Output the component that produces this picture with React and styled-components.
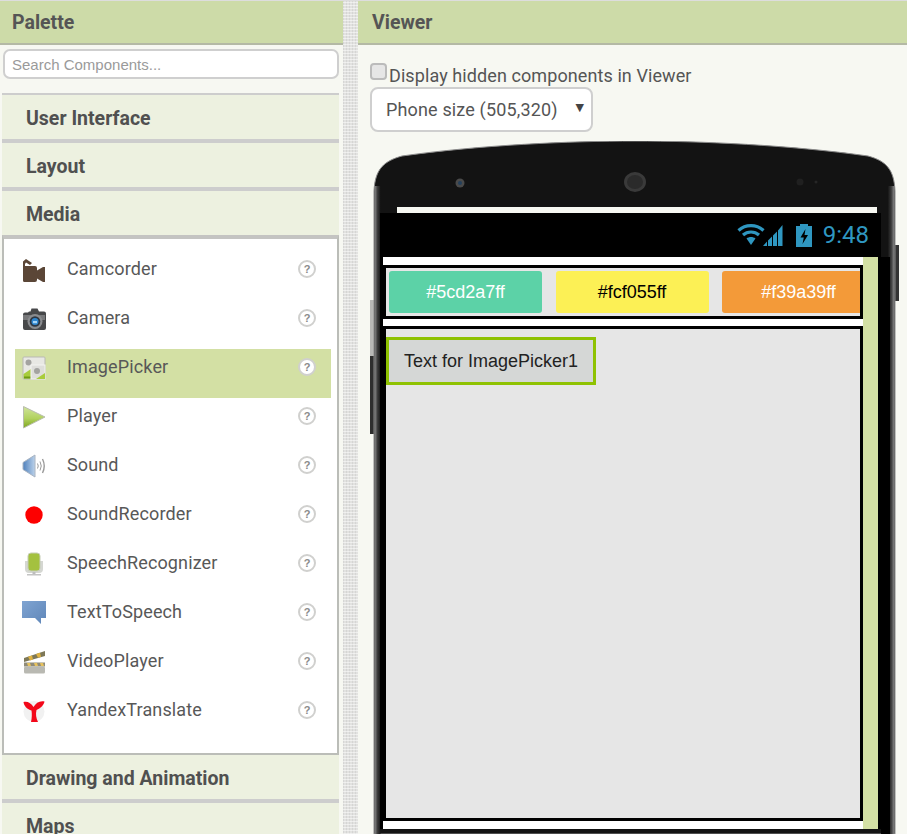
import React from 'react';
import styled, { createGlobalStyle } from 'styled-components';

const GlobalStyle = createGlobalStyle`
  html, body {
    margin: 0;
    padding: 0;
    background: #f7f8f2;
  }
  * {
    box-sizing: border-box;
  }
`;

const Page = styled.div`
  display: flex;
  width: 907px;
  height: 834px;
  padding-top: 1px;
  overflow: hidden;
  background: #dddddd;
  font-family: Roboto, "Liberation Sans", sans-serif;
  color: #555;
`;

const PalettePanel = styled.aside`
  flex: 0 0 343px;
  display: flex;
  flex-direction: column;
  background: #f7f8f2;
`;

const PanelHeader = styled.h2`
  margin: 0;
  flex: 0 0 44px;
  min-height: 0;
  padding-left: ${(p) => p.$inset}px;
  font-size: 19.5px;
  font-weight: 700;
  line-height: 43px;
  color: #555;
  background: #cddba8;
  border-bottom: 2px solid #b4b9a5;
`;

const SearchBox = styled.input`
  display: block;
  flex: 0 0 30px;
  width: 336px;
  height: 30px;
  margin: 4px 0 14px 3px;
  padding: 0 7px;
  border: 2px solid #cfcfcf;
  border-radius: 7px;
  background: #fff;
  font-family: "Liberation Sans", sans-serif;
  font-size: 15px;
  color: #555;
  outline: none;
  &::placeholder {
    color: #9a9a9a;
    opacity: 1;
  }
`;

const Accordion = styled.div`
  flex: none;
  width: 337px;
  margin-left: 2px;
`;

const SectionHeader = styled.div`
  height: ${(p) => 44 + p.$rule}px;
  padding-left: 24px;
  border-top: ${(p) => p.$rule}px solid #cdcdcd;
  background: #edf1e0;
  font-size: 19.5px;
  font-weight: 700;
  line-height: 48px;
  color: #505050;
`;

const Drawer = styled.ul`
  margin: 0;
  padding: 12px 6px 12px 11px;
  list-style: none;
  background: #fff;
  border: 2px solid #bbbdb8;
  border-top: 4px solid #c4c4c2;
`;

const Row = styled.li`
  display: flex;
  align-items: flex-start;
  height: 49px;
  padding: 6px 15px 0 7px;
  background: ${(p) => (p.$selected ? '#d3e0a4' : 'transparent')};
`;

const RowIcon = styled.svg`
  flex: 0 0 24px;
  width: 24px;
  height: 24px;
  margin-top: 1px;
`;

const RowLabel = styled.span`
  flex: 1;
  margin-left: 21px;
  font-size: 18px;
  line-height: 24px;
  letter-spacing: 0.13px;
  color: #585858;
`;

const HelpBadge = styled.span`
  flex: 0 0 18px;
  width: 18px;
  height: 18px;
  margin-top: 3px;
  border: 2px solid #d0d0ce;
  border-radius: 50%;
  background: #fff;
  font-family: "Liberation Sans", sans-serif;
  font-size: 11px;
  font-weight: 700;
  line-height: 14px;
  text-align: center;
  color: #8a8a8a;
`;

const Splitter = styled.div`
  flex: 0 0 15px;
  background-color: #e2e2e0;
  background-image:
    repeating-linear-gradient(0deg, rgba(255, 255, 255, 0.5) 0 1px, transparent 1px 3px),
    repeating-linear-gradient(90deg, rgba(190, 190, 190, 0.35) 0 1px, transparent 1px 3px);
`;

const ViewerPanel = styled.main`
  flex: 1;
  min-width: 0;
  display: flex;
  flex-direction: column;
  background: #f7f8f2;
`;

const ViewerBody = styled.div`
  padding: 18px 0 0 12px;
`;

const HiddenToggle = styled.label`
  display: flex;
  align-items: flex-start;
  height: 24px;
  font-size: 18px;
  line-height: 26px;
  letter-spacing: 0.09px;
  color: #555;
`;

const Check = styled.input`
  appearance: none;
  width: 17px;
  height: 17px;
  margin: 0 2px 0 0;
  border: 2px solid #bbbbbb;
  border-radius: 4px;
  background: #e6e6e6;
`;

const SizeSelect = styled.div`
  position: relative;
  display: flex;
  align-items: center;
  width: 223px;
  height: 45px;
  padding-left: 14px;
  border: 2px solid #cfcfcf;
  border-radius: 8px;
  background: #fff;
  font-size: 18px;
  letter-spacing: 0.15px;
  color: #555;
  &::after {
    content: '▼';
    position: absolute;
    right: 7px;
    top: 12px;
    font-family: "DejaVu Sans", sans-serif;
    font-size: 11px;
    line-height: 14px;
    color: #444;
  }
`;

const PhoneFrame = styled.div`
  position: relative;
  width: 529px;
  margin-top: 9px;
  padding: 72px 18px 0 10px;
`;

const PhoneBody = styled.svg`
  position: absolute;
  left: 0;
  top: 0;
  width: 529px;
  height: 693px;
`;

const StatusBar = styled.div`
  position: relative;
  display: flex;
  align-items: center;
  justify-content: flex-end;
  height: 44px;
  padding-right: 12px;
  background: #000;
`;

const StatusTime = styled.span`
  margin-left: 8px;
  font-size: 24px;
  line-height: 44px;
  color: #2f97c1;
`;

const ScreenRow = styled.div`
  position: relative;
  display: flex;
  height: 572px;
  padding: 0 3px;
  background: #000;
`;

const Canvas = styled.div`
  flex: 1;
  min-width: 0;
  display: flex;
  flex-direction: column;
  gap: 7px;
  padding: 8px 0;
  background: #fff;
`;

const ScrollTrack = styled.div`
  flex: 0 0 15px;
  background: #d3e0a4;
`;

const ButtonRow = styled.div`
  flex: 0 0 54px;
  display: flex;
  gap: 13.500px;
  padding: 3px;
  overflow: hidden;
  border: 3px solid #000;
  background: #e6e6e6;
`;

const ColorButton = styled.div`
  flex: 0 0 153px;
  height: 42px;
  border-radius: 3px;
  background: ${(p) => p.$bg};
  font-family: "Liberation Sans", sans-serif;
  font-size: 18px;
  line-height: 42px;
  text-align: center;
  color: ${(p) => p.$fg};
`;

const Arrangement = styled.div`
  flex: 1;
  padding: 8px 0;
  border: 3px solid #000;
  background: #e6e6e6;
`;

const PickerButton = styled.div`
  width: 210px;
  height: 48px;
  padding-left: 15px;
  border: 3px solid #8fc202;
  background: #d5d7d6;
  font-family: "Liberation Sans", sans-serif;
  font-size: 18px;
  line-height: 42px;
  color: #222;
`;

const icons = {
  camcorder: (
    <>
      <path d="M1 3.500 4 1l6 4-2 2-4-2.500-1 1.500v2h10a2 2 0 0 1 2 2v2.500l6-3.500h2v15h-2l-6-3.500v1.500a2 2 0 0 1-2 2H2a1.500 1.500 0 0 1-1-1.500z" fill="#5b4637" />
    </>
  ),
  camera: (
    <>
      <path d="M1 7.500a2 2 0 0 1 2-2h3l1-1h1.500l1-3h6l1.500 3h5a2 2 0 0 1 2 2V21a2 2 0 0 1-2 2H3a2 2 0 0 1-2-2z" fill="#47484a" />
      <rect x="1" y="8" width="22" height="5" fill="#77787a" />
      <circle cx="13" cy="14.500" r="7.500" fill="#8a8c8f" />
      <circle cx="13" cy="14.500" r="5.300" fill="#2c3744" />
      <circle cx="13" cy="14.500" r="3.500" fill="#2f87d0" />
      <rect x="11" y="14" width="4" height="2.200" fill="#a6d4f6" />
    </>
  ),
  imagepicker: (
    <>
      <rect x="1" y="1" width="22" height="22" rx="1" fill="#e8e8e4" stroke="#b9b9b4" />
      <circle cx="6.500" cy="6.500" r="3" fill="#a3a3a0" />
      <path d="M1.500 18 9 13v9.500H1.500z" fill="#a8cc3c" />
      <path d="M2 20.500h7v2H2z" fill="#6f9c10" />
      <rect x="9" y="9" width="14" height="14" fill="#dededb" stroke="#f3f3f1" />
      <circle cx="15" cy="15" r="3" fill="#a3a3a0" />
      <path d="M23 17v6h-9z" fill="#a8cc3c" />
    </>
  ),
  player: (
    <>
      <defs>
        <linearGradient id="playerFill" x1="0" y1="0" x2="0" y2="1">
          <stop offset="0" stopColor="#cfe49b" />
          <stop offset="0.55" stopColor="#b2d260" />
          <stop offset="1" stopColor="#7ea51e" />
        </linearGradient>
      </defs>
      <path d="M1.500 1.500 23 12 1.500 23z" fill="url(#playerFill)" stroke="#b9bdae" strokeLinejoin="round" />
    </>
  ),
  sound: (
    <>
      <defs>
        <linearGradient id="soundFill" x1="0" y1="0" x2="1" y2="0">
          <stop offset="0" stopColor="#4f81bd" />
          <stop offset="1" stopColor="#bcd2ea" />
        </linearGradient>
      </defs>
      <path d="M1 8.500 13 1v22L1 15.500z" fill="url(#soundFill)" stroke="#a9b4c2" />
      <g fill="none" stroke="#9a9a9a">
        <path d="M15.500 9.500q1.500 2.500 0 5" />
        <path d="M18 7.500q2.500 4.500 0 9" />
        <path d="M20.500 5q3.500 7 0 14" strokeWidth="1.400" />
      </g>
    </>
  ),
  recorder: <circle cx="12" cy="12" r="8.700" fill="#fd0000" />,
  speech: (
    <>
      <path d="M3 9v8a4 4 0 0 0 4 4h10a4 4 0 0 0 4-4V9" fill="#d5d7d2" />
      <rect x="6" y="1" width="12" height="18" rx="3" fill="#a4c13f" stroke="#c6cdb6" />
      <rect x="10.500" y="20" width="3" height="2.500" fill="#bdbdbd" />
      <rect x="5" y="22" width="14" height="1.500" fill="#c4c4c4" />
    </>
  ),
  bubble: (
    <>
      <defs>
        <linearGradient id="bubbleFill" x1="0" y1="0" x2="1" y2="1">
          <stop offset="0" stopColor="#7fa4d2" />
          <stop offset="1" stopColor="#5f86b8" />
        </linearGradient>
      </defs>
      <path d="M0 0h24v17h-5v6l-6-6H0z" fill="url(#bubbleFill)" />
    </>
  ),
  video: (
    <>
      <path d="M2 8 23 1v5L2 12z" fill="#7d7858" />
      <path d="M6 6.800 10 5.500l1 4-3 1zM14 4l4-1.300 1 4-3 1z" fill="#e0b342" />
      <rect x="2" y="12.500" width="21" height="4" fill="#8f8b79" />
      <path d="M5 13h3l1 3H6zM12 13h3l1 3h-3zM18 13h3l1 3h-3z" fill="#e7c25e" />
      <rect x="2" y="16.500" width="21" height="7" rx="1.500" fill="#b9b9b2" />
    </>
  ),
  yandex: (
    <>
      <circle cx="12" cy="12.500" r="10.500" fill="#f1f1f1" />
      <path d="M1.500 3c4-1 7.500 1 10 5 2.500-4 6-6.500 11-5.500-.5 3.500-4 7-8 8.500-1 4-.5 8 1.500 12H9c1-4 1-8 .5-11.500C5.500 10.500 2 7 1.500 3z" fill="#f3081a" />
    </>
  ),
};

const components = [
  ['Camcorder', 'camcorder'],
  ['Camera', 'camera'],
  ['ImagePicker', 'imagepicker', true],
  ['Player', 'player'],
  ['Sound', 'sound'],
  ['SoundRecorder', 'recorder'],
  ['SpeechRecognizer', 'speech'],
  ['TextToSpeech', 'bubble'],
  ['VideoPlayer', 'video'],
  ['YandexTranslate', 'yandex'],
];

function PhoneDrawing() {
  return (
    <PhoneBody viewBox="0 0 529 693">
      <defs>
        <linearGradient id="edgeLeft" x1="0" y1="0" x2="1" y2="0">
          <stop offset="0" stopColor="#8d8d8d" />
          <stop offset="0.5" stopColor="#3c3c3c" />
          <stop offset="1" stopColor="#161616" />
        </linearGradient>
        <linearGradient id="edgeRight" x1="0" y1="0" x2="1" y2="0">
          <stop offset="0" stopColor="#161616" />
          <stop offset="0.5" stopColor="#3c3c3c" />
          <stop offset="1" stopColor="#8d8d8d" />
        </linearGradient>
      </defs>
      <rect x="0" y="159" width="5" height="56" fill="#b9b9b7" />
      <rect x="0" y="215" width="5" height="78" fill="#2e2e2e" />
      <rect x="524" y="104" width="5" height="56" fill="#333" />
      <path
        d="M4 50C5 28 14 20 32 15 110 4 200 0 265 0s155 4 233 15c18 5 26 13 27 35v643H4z"
        fill="#131313"
        stroke="#8a8a8a"
        strokeWidth="1"
      />
      <path d="M4.500 45h6v648h-6z" fill="url(#edgeLeft)" />
      <path d="M518 45h6.500v648H518z" fill="url(#edgeRight)" />
      <rect x="511" y="116" width="9" height="577" fill="#000" />
      <rect x="27" y="66" width="480" height="6" fill="#f7f8f2" />
      <circle cx="90" cy="42" r="4.500" fill="#4a4a4a" />
      <circle cx="90" cy="42" r="2" fill="#24405c" />
      <ellipse cx="265" cy="41" rx="11" ry="10" fill="#3a3a3a" />
      <ellipse cx="265" cy="41" rx="8" ry="7" fill="#2b2b2b" />
      <circle cx="430" cy="41" r="3.500" fill="#202020" />
      <circle cx="446" cy="41" r="1.500" fill="#262626" />
    </PhoneBody>
  );
}

function StatusIcons() {
  return (
    <svg width="78" height="26" viewBox="0 0 78 26">
      <g fill="none" stroke="#2f97c1" strokeWidth="3.200">
        <path d="M1.500 8.500c7-6.500 18-6.500 25 0" />
        <path d="M6 13c4.500-4 11.500-4 16 0" />
      </g>
      <path d="M9.500 16.500c2.500-2 6.500-2 9 0L14 23z" fill="#2f97c1" />
      <path d="M26 24h4v-4.500zM31 24h4V14.500l-4 4zM36 24h4V9.500l-4 4zM41 24h4.500V3L41 8.500z" fill="#2f97c1" />
      <path d="M59 4h4V2h8v2h4v21H59z" fill="#2f97c1" />
      <path d="M68.500 7 63.500 15.500h3.300l-1.300 6.500 5.500-9h-3.500z" fill="#000" />
    </svg>
  );
}

export default function App() {
  return (
    <Page>
      <GlobalStyle />
      <PalettePanel>
        <PanelHeader $inset={12}>Palette</PanelHeader>
        <SearchBox placeholder="Search Components..." />
        <Accordion>
          <SectionHeader $rule={2}>User Interface</SectionHeader>
          <SectionHeader $rule={4}>Layout</SectionHeader>
          <SectionHeader $rule={4}>Media</SectionHeader>
          <Drawer>
            {components.map(([name, icon, selected]) => (
              <Row key={name} $selected={selected}>
                <RowIcon viewBox="0 0 24 24">{icons[icon]}</RowIcon>
                <RowLabel>{name}</RowLabel>
                <HelpBadge>?</HelpBadge>
              </Row>
            ))}
          </Drawer>
          <SectionHeader $rule={0}>Drawing and Animation</SectionHeader>
          <SectionHeader $rule={4}>Maps</SectionHeader>
        </Accordion>
      </PalettePanel>
      <Splitter />
      <ViewerPanel>
        <PanelHeader $inset={14}>Viewer</PanelHeader>
        <ViewerBody>
          <HiddenToggle>
            <Check type="checkbox" />
            Display hidden components in Viewer
          </HiddenToggle>
          <SizeSelect>Phone size (505,320)</SizeSelect>
          <PhoneFrame>
            <PhoneDrawing />
            <StatusBar>
              <StatusIcons />
              <StatusTime>9:48</StatusTime>
            </StatusBar>
            <ScreenRow>
              <Canvas>
                <ButtonRow>
                  <ColorButton $bg="#5cd2a7" $fg="#fff">#5cd2a7ff</ColorButton>
                  <ColorButton $bg="#fcf055" $fg="#000">#fcf055ff</ColorButton>
                  <ColorButton $bg="#f39a39" $fg="#fff">#f39a39ff</ColorButton>
                </ButtonRow>
                <Arrangement>
                  <PickerButton>Text for ImagePicker1</PickerButton>
                </Arrangement>
              </Canvas>
              <ScrollTrack />
            </ScreenRow>
          </PhoneFrame>
        </ViewerBody>
      </ViewerPanel>
    </Page>
  );
}
